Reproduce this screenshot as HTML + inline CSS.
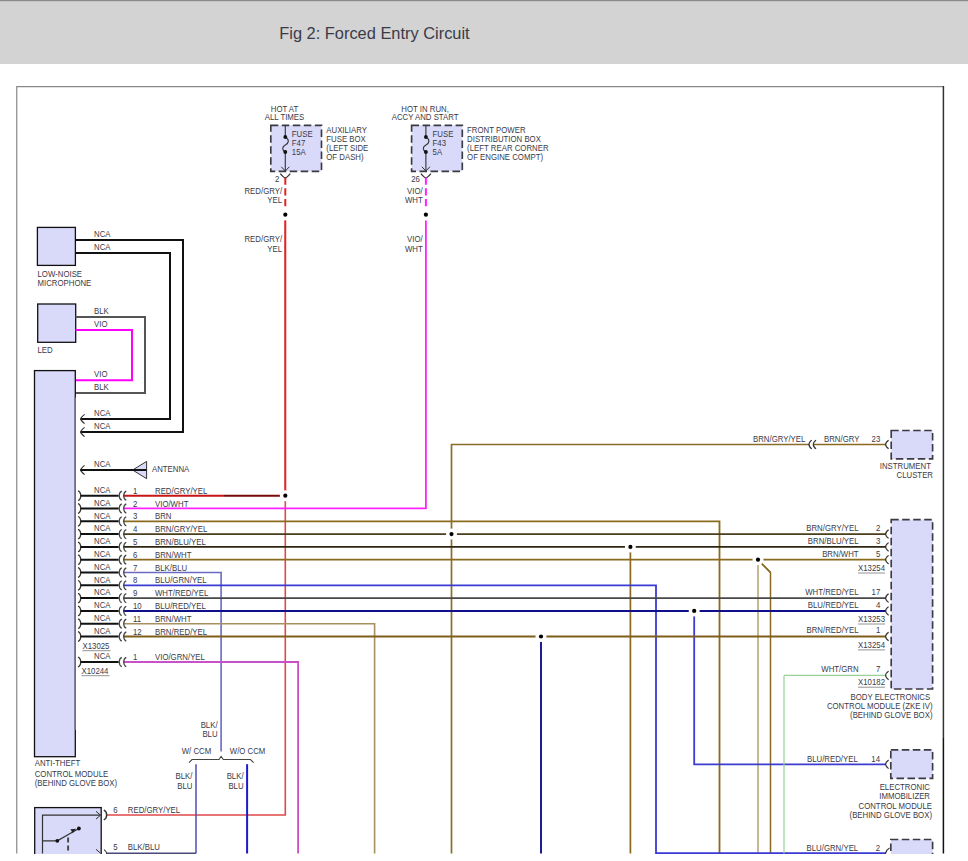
<!DOCTYPE html>
<html><head><meta charset="utf-8"><style>
html,body{margin:0;padding:0;background:#fff;width:968px;height:861px;overflow:hidden}
svg{position:absolute;left:0;top:0;display:block}
text{font-family:"Liberation Sans",sans-serif;font-size:8.4px;fill:#3a3a48}
</style></head><body>
<svg width="968" height="861" viewBox="0 0 968 861">
<rect x="0" y="0" width="968" height="64" fill="#d3d3d3"/>
<rect x="0" y="0" width="968" height="1.2" fill="#8a8a8a"/>
<text x="279.3" y="39.1" fill="#2b2b3b" style="font-size:16.4px">Fig 2: Forced Entry Circuit</text>
<path d="M16.7,86.6 H943.4" stroke="#888" stroke-width="1.4"/>
<path d="M16.7,86 V853.5" stroke="#999" stroke-width="1.4"/>
<path d="M943.4,86 V738" stroke="#333" stroke-width="1.5"/>
<path d="M943.4,738 V853.5" stroke="#111" stroke-width="1.5"/>
<path d="M285.3,220.5 V815 H106.5" stroke="#e04848" stroke-width="1.6" fill="none"/>
<path d="M285.3,220.5 V495.7" stroke="#e02424" stroke-width="1.8" fill="none"/>
<path d="M425.9,220.5 V508.4 H123" stroke="#ff22ff" stroke-width="1.8" fill="none"/>
<rect x="270.8" y="125.3" width="50.7" height="46" fill="#d9d9fa" stroke="#3a3a42" stroke-width="1.65" stroke-dasharray="7.5 3.5"/>
<path d="M285.3,125.3 V137 C289.8,139.5 288.8,143.5 285.3,145 C281.8,147 281.8,150 285.3,152 V171" stroke="#333" stroke-width="1.1" fill="none"/>
<circle cx="285.3" cy="137" r="1.9" fill="#111"/>
<circle cx="285.3" cy="152" r="1.9" fill="#111"/>
<path d="M281.3,166.8 L285.3,171 L289.3,166.8" stroke="#333" stroke-width="1.0" fill="none"/>
<path d="M280.3,173.6 Q284.3,178.2 285.3,177.8 Q286.3,178.2 290.3,173.6" stroke="#333" stroke-width="1.3" fill="none"/>
<path d="M285.3,177.5 V208.5" stroke="#e02424" stroke-width="2.0" fill="none" stroke-dasharray="7.3 3.4"/>
<text transform="translate(284.5,111.8) scale(0.93,1)" text-anchor="middle">HOT AT</text>
<text transform="translate(284.5,120.4) scale(0.93,1)" text-anchor="middle">ALL TIMES</text>
<text transform="translate(291.8,137) scale(0.93,1)">FUSE</text>
<text transform="translate(291.8,145.9) scale(0.93,1)">F47</text>
<text transform="translate(291.8,155.2) scale(0.93,1)">15A</text>
<text transform="translate(326.3,132.8) scale(0.93,1)">AUXILIARY</text>
<text transform="translate(326.3,142.0) scale(0.93,1)">FUSE BOX</text>
<text transform="translate(326.3,151.20000000000002) scale(0.93,1)">(LEFT SIDE</text>
<text transform="translate(326.3,160.4) scale(0.93,1)">OF DASH)</text>
<text transform="translate(279.3,182.4) scale(0.93,1)" text-anchor="end">2</text>
<text transform="translate(282.1,193.5) scale(0.93,1)" text-anchor="end">RED/GRY/</text>
<text transform="translate(282.1,203.3) scale(0.93,1)" text-anchor="end">YEL</text>
<text transform="translate(282.1,241.7) scale(0.93,1)" text-anchor="end">RED/GRY/</text>
<text transform="translate(282.1,251.5) scale(0.93,1)" text-anchor="end">YEL</text>
<rect x="411.6" y="125.3" width="50.7" height="46" fill="#d9d9fa" stroke="#3a3a42" stroke-width="1.65" stroke-dasharray="7.5 3.5"/>
<path d="M425.9,125.3 V137 C430.4,139.5 429.4,143.5 425.9,145 C422.4,147 422.4,150 425.9,152 V171" stroke="#333" stroke-width="1.1" fill="none"/>
<circle cx="425.9" cy="137" r="1.9" fill="#111"/>
<circle cx="425.9" cy="152" r="1.9" fill="#111"/>
<path d="M421.9,166.8 L425.9,171 L429.9,166.8" stroke="#333" stroke-width="1.0" fill="none"/>
<path d="M420.9,173.6 Q424.9,178.2 425.9,177.8 Q426.9,178.2 430.9,173.6" stroke="#333" stroke-width="1.3" fill="none"/>
<path d="M425.9,177.5 V208.5" stroke="#ff22ff" stroke-width="2.0" fill="none" stroke-dasharray="7.3 3.4"/>
<text transform="translate(425.09999999999997,111.8) scale(0.93,1)" text-anchor="middle">HOT IN RUN,</text>
<text transform="translate(425.09999999999997,120.4) scale(0.93,1)" text-anchor="middle">ACCY AND START</text>
<text transform="translate(432.6,137) scale(0.93,1)">FUSE</text>
<text transform="translate(432.6,145.9) scale(0.93,1)">F43</text>
<text transform="translate(432.6,155.2) scale(0.93,1)">5A</text>
<text transform="translate(467.1,132.8) scale(0.93,1)">FRONT POWER</text>
<text transform="translate(467.1,142.0) scale(0.93,1)">DISTRIBUTION BOX</text>
<text transform="translate(467.1,151.20000000000002) scale(0.93,1)">(LEFT REAR CORNER</text>
<text transform="translate(467.1,160.4) scale(0.93,1)">OF ENGINE COMPT)</text>
<text transform="translate(419.9,182.4) scale(0.93,1)" text-anchor="end">26</text>
<text transform="translate(422.7,193.5) scale(0.93,1)" text-anchor="end">VIO/</text>
<text transform="translate(422.7,203.3) scale(0.93,1)" text-anchor="end">WHT</text>
<text transform="translate(422.7,241.7) scale(0.93,1)" text-anchor="end">VIO/</text>
<text transform="translate(422.7,251.5) scale(0.93,1)" text-anchor="end">WHT</text>
<rect x="37.4" y="227.4" width="38" height="38" fill="#d9d9fa" stroke="#111" stroke-width="1.3"/>
<text transform="translate(37.5,276.8) scale(0.93,1)">LOW-NOISE</text>
<text transform="translate(37.5,285.8) scale(0.93,1)">MICROPHONE</text>
<path d="M75.5,240 H183 V432 H80.5" stroke="#111" stroke-width="2" fill="none"/>
<path d="M75.5,253 H170 V419 H80.5" stroke="#111" stroke-width="2" fill="none"/>
<text transform="translate(94,237) scale(0.93,1)">NCA</text>
<text transform="translate(94,250) scale(0.93,1)">NCA</text>
<text transform="translate(94,416.2) scale(0.93,1)">NCA</text>
<text transform="translate(94,429.2) scale(0.93,1)">NCA</text>
<path d="M84.6,414.4 Q81,417.4 80.6,419 Q81,420.6 84.6,423.6" stroke="#333" stroke-width="1.2" fill="none"/>
<path d="M84.6,427.4 Q81,430.4 80.6,432 Q81,433.6 84.6,436.6" stroke="#333" stroke-width="1.2" fill="none"/>
<path d="M84.6,465.4 Q81,468.4 80.6,470 Q81,471.6 84.6,474.6" stroke="#333" stroke-width="1.2" fill="none"/>
<rect x="37.7" y="304" width="38" height="38.3" fill="#d9d9fa" stroke="#111" stroke-width="1.3"/>
<text transform="translate(37.5,352.6) scale(0.93,1)">LED</text>
<path d="M75.5,317 H145 V393 H75.5" stroke="#555" stroke-width="2" fill="none"/>
<path d="M75.5,330 H132 V380.3 H75.5" stroke="#ff00ff" stroke-width="2" fill="none"/>
<text transform="translate(94,314) scale(0.93,1)">BLK</text>
<text transform="translate(94,327) scale(0.93,1)">VIO</text>
<text transform="translate(94,377.4) scale(0.93,1)">VIO</text>
<text transform="translate(94,390.2) scale(0.93,1)">BLK</text>
<rect x="34.5" y="370.6" width="40.8" height="386.1" fill="#d9d9fa" stroke="#111" stroke-width="1.3"/>
<path d="M75.3,397.5 V730" stroke="#6c6c8c" stroke-width="1.4" fill="none"/>
<text transform="translate(34.7,766.4) scale(0.93,1)">ANTI-THEFT</text>
<text transform="translate(34.7,776.6) scale(0.93,1)">CONTROL MODULE</text>
<text transform="translate(34.7,785.9) scale(0.93,1)">(BEHIND GLOVE BOX)</text>
<text transform="translate(94,467) scale(0.93,1)">NCA</text>
<path d="M80.5,470 H146.6" stroke="#111" stroke-width="2" fill="none"/>
<path d="M132.6,470 L146.6,461.4 L146.6,478.7 Z" fill="#d9d9fa" stroke="#333" stroke-width="1"/>
<path d="M132.6,470 H146.6" stroke="#111" stroke-width="2" fill="none"/>
<text transform="translate(152,472.3) scale(0.93,1)">ANTENNA</text>
<path d="M123,495.7 H224" stroke="#c81414" stroke-width="1.9" fill="none"/>
<path d="M224,495.7 H285.3" stroke="#7a0a0a" stroke-width="1.9" fill="none"/>
<path d="M123,521.3 H719.5 V853.5" stroke="#8a6a1e" stroke-width="1.8" fill="none"/>
<path d="M123,534.1 H886" stroke="#4a3c1c" stroke-width="1.9" fill="none"/>
<path d="M451.5,853.5 V444.5 H809" stroke="#8a6e2a" stroke-width="1.7" fill="none"/>
<path d="M813.5,444.5 H886" stroke="#8a6a1e" stroke-width="1.6" fill="none"/>
<path d="M123,546.9 H886" stroke="#2e2610" stroke-width="1.9" fill="none"/>
<path d="M630.4,546.9 V853.5" stroke="#8a6a1e" stroke-width="1.7" fill="none"/>
<path d="M123,559.7 H886" stroke="#8a6a1e" stroke-width="1.8" fill="none"/>
<path d="M758,559.7 V853.5" stroke="#b09a66" stroke-width="1.4" fill="none"/>
<path d="M758,559.7 L770.5,572.5 V853.5" stroke="#8a6a1e" stroke-width="1.5" fill="none"/>
<path d="M123,572.5 H221.1 V751.4" stroke="#6a6ac4" stroke-width="1.6" fill="none"/>
<path d="M123,585.3 H656 V853.2 H886" stroke="#3a3ad4" stroke-width="1.8" fill="none"/>
<path d="M123,598.1 H886" stroke="#484848" stroke-width="1.6" fill="none"/>
<path d="M123,610.9 H886" stroke="#10108e" stroke-width="2.0" fill="none"/>
<path d="M694.2,610.9 V764.3 H886" stroke="#3c3cd0" stroke-width="1.8" fill="none"/>
<path d="M123,623.7 H374.6 V853.5" stroke="#a89060" stroke-width="1.6" fill="none"/>
<path d="M123,636.5 H886" stroke="#7e5e1a" stroke-width="1.8" fill="none"/>
<path d="M541,636.5 V853.5" stroke="#1c1c94" stroke-width="2.0" fill="none"/>
<path d="M123,662.0 H298.1 V853.5" stroke="#c850c8" stroke-width="1.8" fill="none"/>
<path d="M784,675.4 V853.5" stroke="#98d098" stroke-width="1.2" fill="none"/>
<path d="M784,675.4 H886" stroke="#98d098" stroke-width="1.4" fill="none"/>
<path d="M196,764.2 V853.2" stroke="#4e4eb4" stroke-width="1.5" fill="none"/>
<path d="M196,853.2 H106" stroke="#4a4a7a" stroke-width="1.5" fill="none"/>
<path d="M247.1,764.2 V853.5" stroke="#1a1ad0" stroke-width="2.0" fill="none"/>
<path d="M78.0,490.9 C81.6,492.09999999999997 81.6,499.3 78.0,500.5" stroke="#333" stroke-width="1.3" fill="none"/>
<path d="M80.8,495.7 H118.7" stroke="#111" stroke-width="2" fill="none"/>
<path d="M121.8,491.09999999999997 C118.4,492.3 118.4,499.09999999999997 121.8,500.3" stroke="#444" stroke-width="1.2" fill="none"/>
<path d="M126.3,491.09999999999997 C122.9,492.3 122.9,499.09999999999997 126.3,500.3" stroke="#444" stroke-width="1.2" fill="none"/>
<text transform="translate(94,492.9) scale(0.93,1)">NCA</text>
<text transform="translate(133,493.8) scale(0.93,1)">1</text>
<text transform="translate(155,493.8) scale(0.93,1)">RED/GRY/YEL</text>
<path d="M78.0,503.7 C81.6,504.9 81.6,512.1 78.0,513.3" stroke="#333" stroke-width="1.3" fill="none"/>
<path d="M80.8,508.5 H118.7" stroke="#111" stroke-width="2" fill="none"/>
<path d="M121.8,503.9 C118.4,505.1 118.4,511.9 121.8,513.1" stroke="#444" stroke-width="1.2" fill="none"/>
<path d="M126.3,503.9 C122.9,505.1 122.9,511.9 126.3,513.1" stroke="#444" stroke-width="1.2" fill="none"/>
<text transform="translate(94,505.7) scale(0.93,1)">NCA</text>
<text transform="translate(133,506.6) scale(0.93,1)">2</text>
<text transform="translate(155,506.6) scale(0.93,1)">VIO/WHT</text>
<path d="M78.0,516.5 C81.6,517.6999999999999 81.6,524.9 78.0,526.0999999999999" stroke="#333" stroke-width="1.3" fill="none"/>
<path d="M80.8,521.3 H118.7" stroke="#111" stroke-width="2" fill="none"/>
<path d="M121.8,516.6999999999999 C118.4,517.9 118.4,524.6999999999999 121.8,525.9" stroke="#444" stroke-width="1.2" fill="none"/>
<path d="M126.3,516.6999999999999 C122.9,517.9 122.9,524.6999999999999 126.3,525.9" stroke="#444" stroke-width="1.2" fill="none"/>
<text transform="translate(94,518.5) scale(0.93,1)">NCA</text>
<text transform="translate(133,519.4) scale(0.93,1)">3</text>
<text transform="translate(155,519.4) scale(0.93,1)">BRN</text>
<path d="M78.0,529.3000000000001 C81.6,530.5 81.6,537.7 78.0,538.9" stroke="#333" stroke-width="1.3" fill="none"/>
<path d="M80.8,534.1 H118.7" stroke="#111" stroke-width="2" fill="none"/>
<path d="M121.8,529.5 C118.4,530.7 118.4,537.5 121.8,538.7" stroke="#444" stroke-width="1.2" fill="none"/>
<path d="M126.3,529.5 C122.9,530.7 122.9,537.5 126.3,538.7" stroke="#444" stroke-width="1.2" fill="none"/>
<text transform="translate(94,531.3) scale(0.93,1)">NCA</text>
<text transform="translate(133,532.2) scale(0.93,1)">4</text>
<text transform="translate(155,532.2) scale(0.93,1)">BRN/GRY/YEL</text>
<path d="M78.0,542.1 C81.6,543.3 81.6,550.5 78.0,551.6999999999999" stroke="#333" stroke-width="1.3" fill="none"/>
<path d="M80.8,546.9 H118.7" stroke="#111" stroke-width="2" fill="none"/>
<path d="M121.8,542.3 C118.4,543.5 118.4,550.3 121.8,551.5" stroke="#444" stroke-width="1.2" fill="none"/>
<path d="M126.3,542.3 C122.9,543.5 122.9,550.3 126.3,551.5" stroke="#444" stroke-width="1.2" fill="none"/>
<text transform="translate(94,544.1) scale(0.93,1)">NCA</text>
<text transform="translate(133,545.0) scale(0.93,1)">5</text>
<text transform="translate(155,545.0) scale(0.93,1)">BRN/BLU/YEL</text>
<path d="M78.0,554.9000000000001 C81.6,556.1 81.6,563.3000000000001 78.0,564.5" stroke="#333" stroke-width="1.3" fill="none"/>
<path d="M80.8,559.7 H118.7" stroke="#111" stroke-width="2" fill="none"/>
<path d="M121.8,555.1 C118.4,556.3000000000001 118.4,563.1 121.8,564.3000000000001" stroke="#444" stroke-width="1.2" fill="none"/>
<path d="M126.3,555.1 C122.9,556.3000000000001 122.9,563.1 126.3,564.3000000000001" stroke="#444" stroke-width="1.2" fill="none"/>
<text transform="translate(94,556.9) scale(0.93,1)">NCA</text>
<text transform="translate(133,557.8) scale(0.93,1)">6</text>
<text transform="translate(155,557.8) scale(0.93,1)">BRN/WHT</text>
<path d="M78.0,567.7 C81.6,568.9 81.6,576.1 78.0,577.3" stroke="#333" stroke-width="1.3" fill="none"/>
<path d="M80.8,572.5 H118.7" stroke="#111" stroke-width="2" fill="none"/>
<path d="M121.8,567.9 C118.4,569.1 118.4,575.9 121.8,577.1" stroke="#444" stroke-width="1.2" fill="none"/>
<path d="M126.3,567.9 C122.9,569.1 122.9,575.9 126.3,577.1" stroke="#444" stroke-width="1.2" fill="none"/>
<text transform="translate(94,569.7) scale(0.93,1)">NCA</text>
<text transform="translate(133,570.6) scale(0.93,1)">7</text>
<text transform="translate(155,570.6) scale(0.93,1)">BLK/BLU</text>
<path d="M78.0,580.5 C81.6,581.6999999999999 81.6,588.9 78.0,590.0999999999999" stroke="#333" stroke-width="1.3" fill="none"/>
<path d="M80.8,585.3 H118.7" stroke="#111" stroke-width="2" fill="none"/>
<path d="M121.8,580.6999999999999 C118.4,581.9 118.4,588.6999999999999 121.8,589.9" stroke="#444" stroke-width="1.2" fill="none"/>
<path d="M126.3,580.6999999999999 C122.9,581.9 122.9,588.6999999999999 126.3,589.9" stroke="#444" stroke-width="1.2" fill="none"/>
<text transform="translate(94,582.5) scale(0.93,1)">NCA</text>
<text transform="translate(133,583.4) scale(0.93,1)">8</text>
<text transform="translate(155,583.4) scale(0.93,1)">BLU/GRN/YEL</text>
<path d="M78.0,593.3000000000001 C81.6,594.5 81.6,601.7 78.0,602.9" stroke="#333" stroke-width="1.3" fill="none"/>
<path d="M80.8,598.1 H118.7" stroke="#111" stroke-width="2" fill="none"/>
<path d="M121.8,593.5 C118.4,594.7 118.4,601.5 121.8,602.7" stroke="#444" stroke-width="1.2" fill="none"/>
<path d="M126.3,593.5 C122.9,594.7 122.9,601.5 126.3,602.7" stroke="#444" stroke-width="1.2" fill="none"/>
<text transform="translate(94,595.3) scale(0.93,1)">NCA</text>
<text transform="translate(133,596.2) scale(0.93,1)">9</text>
<text transform="translate(155,596.2) scale(0.93,1)">WHT/RED/YEL</text>
<path d="M78.0,606.1 C81.6,607.3 81.6,614.5 78.0,615.6999999999999" stroke="#333" stroke-width="1.3" fill="none"/>
<path d="M80.8,610.9 H118.7" stroke="#111" stroke-width="2" fill="none"/>
<path d="M121.8,606.3 C118.4,607.5 118.4,614.3 121.8,615.5" stroke="#444" stroke-width="1.2" fill="none"/>
<path d="M126.3,606.3 C122.9,607.5 122.9,614.3 126.3,615.5" stroke="#444" stroke-width="1.2" fill="none"/>
<text transform="translate(94,608.1) scale(0.93,1)">NCA</text>
<text transform="translate(133,609.0) scale(0.93,1)">10</text>
<text transform="translate(155,609.0) scale(0.93,1)">BLU/RED/YEL</text>
<path d="M78.0,618.9000000000001 C81.6,620.1 81.6,627.3000000000001 78.0,628.5" stroke="#333" stroke-width="1.3" fill="none"/>
<path d="M80.8,623.7 H118.7" stroke="#111" stroke-width="2" fill="none"/>
<path d="M121.8,619.1 C118.4,620.3000000000001 118.4,627.1 121.8,628.3000000000001" stroke="#444" stroke-width="1.2" fill="none"/>
<path d="M126.3,619.1 C122.9,620.3000000000001 122.9,627.1 126.3,628.3000000000001" stroke="#444" stroke-width="1.2" fill="none"/>
<text transform="translate(94,620.9) scale(0.93,1)">NCA</text>
<text transform="translate(133,621.8) scale(0.93,1)">11</text>
<text transform="translate(155,621.8) scale(0.93,1)">BRN/WHT</text>
<path d="M78.0,631.7 C81.6,632.9 81.6,640.1 78.0,641.3" stroke="#333" stroke-width="1.3" fill="none"/>
<path d="M80.8,636.5 H118.7" stroke="#111" stroke-width="2" fill="none"/>
<path d="M121.8,631.9 C118.4,633.1 118.4,639.9 121.8,641.1" stroke="#444" stroke-width="1.2" fill="none"/>
<path d="M126.3,631.9 C122.9,633.1 122.9,639.9 126.3,641.1" stroke="#444" stroke-width="1.2" fill="none"/>
<text transform="translate(94,633.7) scale(0.93,1)">NCA</text>
<text transform="translate(133,634.6) scale(0.93,1)">12</text>
<text transform="translate(155,634.6) scale(0.93,1)">BRN/RED/YEL</text>
<path d="M78.0,657.2 C81.6,658.4 81.6,665.6 78.0,666.8" stroke="#333" stroke-width="1.3" fill="none"/>
<path d="M80.8,662.0 H118.7" stroke="#111" stroke-width="2" fill="none"/>
<path d="M121.8,657.4 C118.4,658.6 118.4,665.4 121.8,666.6" stroke="#444" stroke-width="1.2" fill="none"/>
<path d="M126.3,657.4 C122.9,658.6 122.9,665.4 126.3,666.6" stroke="#444" stroke-width="1.2" fill="none"/>
<text transform="translate(94,659.2) scale(0.93,1)">NCA</text>
<text transform="translate(133,660.1) scale(0.93,1)">1</text>
<text transform="translate(155,660.1) scale(0.93,1)">VIO/GRN/YEL</text>
<text transform="translate(82.5,648.5) scale(0.93,1)">X13025</text>
<path d="M82.5,650.7 h28" stroke="#777" stroke-width="0.8"/>
<text transform="translate(81.5,673.5) scale(0.93,1)">X10244</text>
<path d="M81.5,675.7 h28" stroke="#777" stroke-width="0.8"/>
<circle cx="285.3" cy="214.7" r="5.2" fill="#fff"/>
<circle cx="285.3" cy="214.7" r="2.1" fill="#000"/>
<circle cx="425.9" cy="214.7" r="5.2" fill="#fff"/>
<circle cx="425.9" cy="214.7" r="2.1" fill="#000"/>
<circle cx="285.3" cy="495.7" r="5.5" fill="#fff"/>
<circle cx="285.3" cy="495.7" r="2.1" fill="#000"/>
<circle cx="451.5" cy="534.1" r="5.5" fill="#fff"/>
<circle cx="451.5" cy="534.1" r="2.1" fill="#000"/>
<circle cx="630.4" cy="546.9" r="5.5" fill="#fff"/>
<circle cx="630.4" cy="546.9" r="2.1" fill="#000"/>
<circle cx="758" cy="559.7" r="5.5" fill="#fff"/>
<circle cx="758" cy="559.7" r="2.1" fill="#000"/>
<circle cx="694.2" cy="610.9" r="5.5" fill="#fff"/>
<circle cx="694.2" cy="610.9" r="2.1" fill="#000"/>
<circle cx="541" cy="636.5" r="5.5" fill="#fff"/>
<circle cx="541" cy="636.5" r="2.1" fill="#000"/>
<path d="M762.2,564.1 L770.5,572.5" stroke="#8a6a1e" stroke-width="1.5" fill="none"/>
<rect x="891.2" y="430.5" width="41.4" height="28.3" fill="#d9d9fa" stroke="#3a3a42" stroke-width="1.65" stroke-dasharray="7.5 3.5"/>
<text transform="translate(753,441.5) scale(0.93,1)">BRN/GRY/YEL</text>
<text transform="translate(824,441.7) scale(0.93,1)">BRN/GRY</text>
<text transform="translate(880.3,441.7) scale(0.93,1)" text-anchor="end">23</text>
<path d="M811.7,440.1 Q808.8,442.6 809.1,444.5 Q808.8,446.4 811.7,448.9" stroke="#333" stroke-width="1.25" fill="none"/>
<path d="M816,440.1 Q813.1,442.6 813.4,444.5 Q813.1,446.4 816,448.9" stroke="#333" stroke-width="1.25" fill="none"/>
<path d="M888.6,440.2 Q885.4,442.7 885.7,444.5 Q885.4,446.3 888.6,448.8" stroke="#333" stroke-width="1.2" fill="none"/>
<text transform="translate(931,468.8) scale(0.93,1)" text-anchor="end">INSTRUMENT</text>
<text transform="translate(933,477.7) scale(0.93,1)" text-anchor="end">CLUSTER</text>
<rect x="891.2" y="519.6" width="41.4" height="169.4" fill="#d9d9fa" stroke="#3a3a42" stroke-width="1.65" stroke-dasharray="7.5 3.5"/>
<text transform="translate(858.6,531.0) scale(0.93,1)" text-anchor="end">BRN/GRY/YEL</text>
<text transform="translate(880.3,531.0) scale(0.93,1)" text-anchor="end">2</text>
<path d="M888.6,529.8000000000001 Q885.4,532.3000000000001 885.7,534.1 Q885.4,535.9 888.6,538.4" stroke="#333" stroke-width="1.2" fill="none"/>
<text transform="translate(858.6,543.8) scale(0.93,1)" text-anchor="end">BRN/BLU/YEL</text>
<text transform="translate(880.3,543.8) scale(0.93,1)" text-anchor="end">3</text>
<path d="M888.6,542.6 Q885.4,545.1 885.7,546.9 Q885.4,548.6999999999999 888.6,551.1999999999999" stroke="#333" stroke-width="1.2" fill="none"/>
<text transform="translate(858.6,556.6) scale(0.93,1)" text-anchor="end">BRN/WHT</text>
<text transform="translate(880.3,556.6) scale(0.93,1)" text-anchor="end">5</text>
<path d="M888.6,555.4000000000001 Q885.4,557.9000000000001 885.7,559.7 Q885.4,561.5 888.6,564.0" stroke="#333" stroke-width="1.2" fill="none"/>
<text transform="translate(858.6,595.0) scale(0.93,1)" text-anchor="end">WHT/RED/YEL</text>
<text transform="translate(880.3,595.0) scale(0.93,1)" text-anchor="end">17</text>
<path d="M888.6,593.8000000000001 Q885.4,596.3000000000001 885.7,598.1 Q885.4,599.9 888.6,602.4" stroke="#333" stroke-width="1.2" fill="none"/>
<text transform="translate(858.6,607.8) scale(0.93,1)" text-anchor="end">BLU/RED/YEL</text>
<text transform="translate(880.3,607.8) scale(0.93,1)" text-anchor="end">4</text>
<path d="M888.6,606.6 Q885.4,609.1 885.7,610.9 Q885.4,612.6999999999999 888.6,615.1999999999999" stroke="#333" stroke-width="1.2" fill="none"/>
<text transform="translate(858.6,633.4) scale(0.93,1)" text-anchor="end">BRN/RED/YEL</text>
<text transform="translate(880.3,633.4) scale(0.93,1)" text-anchor="end">1</text>
<path d="M888.6,632.2 Q885.4,634.7 885.7,636.5 Q885.4,638.3 888.6,640.8" stroke="#333" stroke-width="1.2" fill="none"/>
<text transform="translate(858.6,672.3) scale(0.93,1)" text-anchor="end">WHT/GRN</text>
<text transform="translate(880.3,672.3) scale(0.93,1)" text-anchor="end">7</text>
<path d="M888.6,671.1 Q885.4,673.6 885.7,675.4 Q885.4,677.1999999999999 888.6,679.6999999999999" stroke="#333" stroke-width="1.2" fill="none"/>
<text transform="translate(885,570.8) scale(0.93,1)" text-anchor="end">X13254</text>
<path d="M858,573.0 h27" stroke="#777" stroke-width="0.8"/>
<text transform="translate(885,621.8) scale(0.93,1)" text-anchor="end">X13253</text>
<path d="M858,624.0 h27" stroke="#777" stroke-width="0.8"/>
<text transform="translate(885,647.7) scale(0.93,1)" text-anchor="end">X13254</text>
<path d="M858,649.9000000000001 h27" stroke="#777" stroke-width="0.8"/>
<text transform="translate(885,685) scale(0.93,1)" text-anchor="end">X10182</text>
<path d="M858,687.2 h27" stroke="#777" stroke-width="0.8"/>
<text transform="translate(930.2,699.9) scale(0.93,1)" text-anchor="end">BODY ELECTRONICS</text>
<text transform="translate(932.5,709) scale(0.93,1)" text-anchor="end">CONTROL MODULE (ZKE IV)</text>
<text transform="translate(932.5,718) scale(0.93,1)" text-anchor="end">(BEHIND GLOVE BOX)</text>
<rect x="890.8" y="749.8" width="41.8" height="28.6" fill="#d9d9fa" stroke="#3a3a42" stroke-width="1.65" stroke-dasharray="7.5 3.5"/>
<text transform="translate(857.8,761.9) scale(0.93,1)" text-anchor="end">BLU/RED/YEL</text>
<text transform="translate(880,761.9) scale(0.93,1)" text-anchor="end">14</text>
<path d="M888.6,760.0 Q885.4,762.5 885.7,764.3 Q885.4,766.0999999999999 888.6,768.5999999999999" stroke="#333" stroke-width="1.2" fill="none"/>
<text transform="translate(930,790) scale(0.93,1)" text-anchor="end">ELECTRONIC</text>
<text transform="translate(930,799.4) scale(0.93,1)" text-anchor="end">IMMOBILIZER</text>
<text transform="translate(932,808.6) scale(0.93,1)" text-anchor="end">CONTROL MODULE</text>
<text transform="translate(932,817.6) scale(0.93,1)" text-anchor="end">(BEHIND GLOVE BOX)</text>
<rect x="890.8" y="839.5" width="41.8" height="30" fill="#d9d9fa" stroke="#3a3a42" stroke-width="1.65" stroke-dasharray="7.5 3.5"/>
<text transform="translate(858.2,850.8) scale(0.93,1)" text-anchor="end">BLU/GRN/YEL</text>
<text transform="translate(880,850.8) scale(0.93,1)" text-anchor="end">2</text>
<path d="M885.5,853.5 Q886.5,849.5 889.5,848" stroke="#333" stroke-width="1.1" fill="none"/>
<text transform="translate(217.6,727.5) scale(0.93,1)" text-anchor="end">BLK/</text>
<text transform="translate(217.6,736.6) scale(0.93,1)" text-anchor="end">BLU</text>
<text transform="translate(181.7,753.9) scale(0.93,1)">W/ CCM</text>
<text transform="translate(229.8,753.9) scale(0.93,1)">W/O CCM</text>
<path d="M189.1,762.6 L192,759.5 H219 L221.1,756.5 L223.3,759.5 H250.5 L253.6,762.6" stroke="#444" stroke-width="1.1" fill="none"/>
<text transform="translate(192.5,778.7) scale(0.93,1)" text-anchor="end">BLK/</text>
<text transform="translate(192.5,788.6) scale(0.93,1)" text-anchor="end">BLU</text>
<text transform="translate(243.6,778.7) scale(0.93,1)" text-anchor="end">BLK/</text>
<text transform="translate(243.6,788.6) scale(0.93,1)" text-anchor="end">BLU</text>
<rect x="34.7" y="807.6" width="66.5" height="60" fill="#d9d9fa" stroke="#111" stroke-width="1.3"/>
<path d="M42.5,853.5 V815.2 H100.5" stroke="#333" stroke-width="1.2" fill="none"/>
<path d="M96,811.3 L100.5,815.2 L96,819.1" stroke="#333" stroke-width="1.0" fill="none"/>
<path d="M103.8,810.2 C107.6,811.8 107.6,818.2 103.8,819.8" stroke="#333" stroke-width="1.4" fill="none"/>
<path d="M42.5,840.8 H57.3 L78.9,828.5" stroke="#333" stroke-width="1.2" fill="none"/>
<circle cx="57.3" cy="840.8" r="1.9" fill="#111"/>
<circle cx="78.9" cy="828.5" r="1.9" fill="#111"/>
<path d="M76,828.7 L70.5,829.3 L72.6,833.2 Z" fill="#222"/>
<path d="M68.1,837.5 V853.5" stroke="#444" stroke-width="1.9" fill="none" stroke-dasharray="5 3"/>
<path d="M96,849.3 L100.5,853.2" stroke="#333" stroke-width="1.0" fill="none"/>
<path d="M104,849.6 Q106.5,851.5 106.8,853.5" stroke="#333" stroke-width="1.1" fill="none"/>
<text transform="translate(113.3,812.7) scale(0.93,1)">6</text>
<text transform="translate(127.8,812.7) scale(0.93,1)">RED/GRY/YEL</text>
<text transform="translate(113.3,850.4) scale(0.93,1)">5</text>
<text transform="translate(127.8,850.4) scale(0.93,1)">BLK/BLU</text>
<rect x="0" y="854" width="968" height="7" fill="#fff"/>
</svg>
</body></html>
